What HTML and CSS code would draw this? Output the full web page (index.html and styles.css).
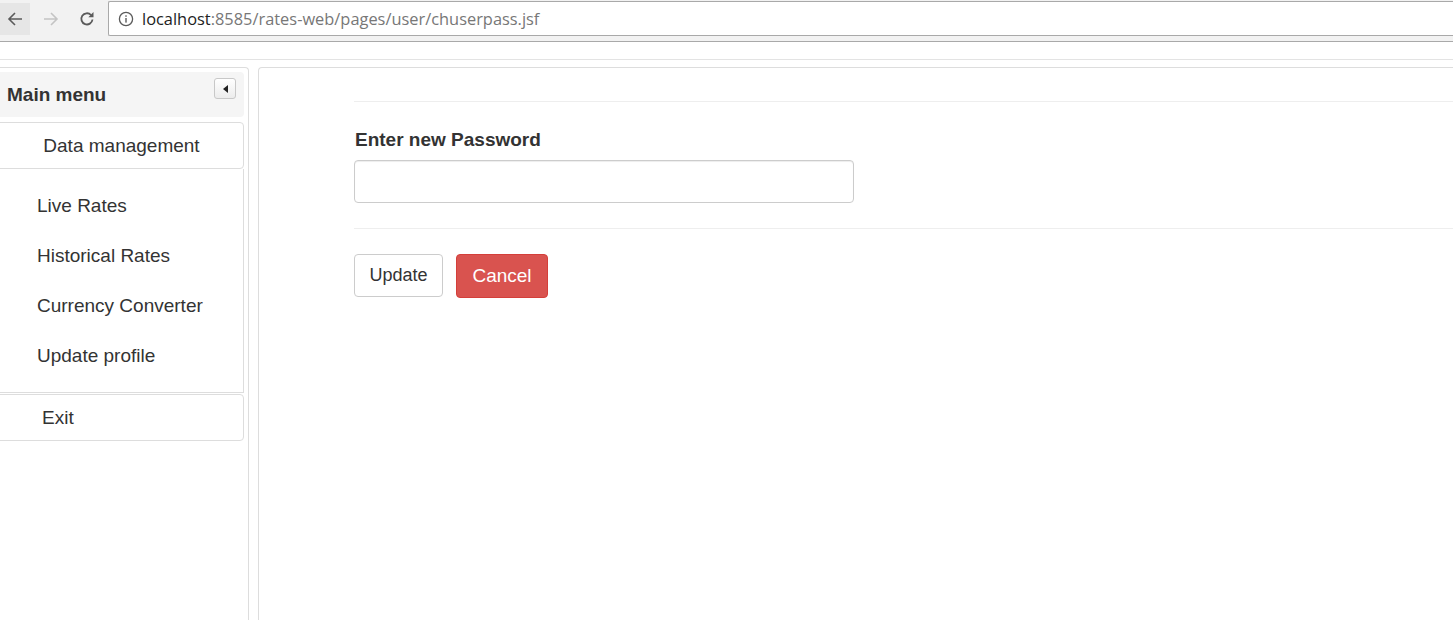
FILE: index.html
```html
<!DOCTYPE html>
<html>
<head>
<meta charset="utf-8">
<link rel="stylesheet" href="styles.css">
</head>
<body>
<div class="toolbar">
  <div class="nav-btn back">
    <svg width="18" height="18" viewBox="0 0 18 18"><path d="M16 9H3M9 3L3 9l6 6" fill="none" stroke="#5a5a5a" stroke-width="1.6"/></svg>
  </div>
  <div class="nav-btn fwd">
    <svg width="18" height="18" viewBox="0 0 18 18"><path d="M2 9h13M9 3l6 6-6 6" fill="none" stroke="#c4c4c4" stroke-width="1.6"/></svg>
  </div>
  <div class="nav-btn reload">
    <svg width="18" height="18" viewBox="0 0 18 18"><path d="M14.5 9.5A5.6 5.6 0 1 1 13 5" fill="none" stroke="#5a5a5a" stroke-width="1.8"/><path d="M15.5 2v5.2h-5.2z" fill="#5a5a5a"/></svg>
  </div>
  <div class="omnibox">
    <svg class="info" width="16" height="16" viewBox="0 0 16 16"><circle cx="8" cy="8" r="6.6" fill="none" stroke="#5a5a5a" stroke-width="1.3"/><rect x="7.3" y="7" width="1.4" height="4.6" fill="#5a5a5a"/><rect x="7.3" y="4.3" width="1.4" height="1.5" fill="#5a5a5a"/></svg>
    <span class="host">localhost</span><span class="path">:8585/rates-web/pages/user/chuserpass.jsf</span>
  </div>
</div>
<div class="topbar"></div>
<div class="layout">
  <aside class="sidebar">
    <div class="menu-header">
      <span>Main menu</span>
      <div class="toggle"><span class="tri"></span></div>
    </div>
    <div class="menu-box centered">Data management</div>
    <ul class="menu-list">
      <li>Live Rates</li>
      <li>Historical Rates</li>
      <li>Currency Converter</li>
      <li>Update profile</li>
    </ul>
    <div class="menu-box exit">Exit</div>
  </aside>
  <main class="content">
    <div class="form">
      <hr class="sep first">
      <label class="label">Enter new Password</label>
      <input class="input" type="password">
      <hr class="sep">
      <div class="actions">
        <button class="btn btn-default">Update</button>
        <button class="btn btn-danger">Cancel</button>
      </div>
    </div>
  </main>
</div>
</body>
</html>
```
FILE: styles.css
```css
html, body {
  margin: 0;
  padding: 0;
  height: 100%;
  overflow: hidden;
  background: #fff;
  font-family: "Liberation Sans", Arial, sans-serif;
  color: #333;
}

.toolbar {
  height: 41px;
  background: #f2f2f2;
  border-bottom: 1px solid #a9a9a9;
  display: flex;
  align-items: flex-start;
}

.nav-btn {
  width: 30px;
  height: 32px;
  margin-top: 3px;
  display: flex;
  align-items: center;
  justify-content: center;
}
.nav-btn.back { background: #e6e6e6; }
.nav-btn.fwd { margin-left: 6px; }
.nav-btn.reload { margin-left: 6px; }

.omnibox {
  margin-left: 6px;
  margin-top: 1px;
  flex: 1;
  height: 33px;
  background: #fff;
  border: 1px solid #a9a9a9;
  border-right: none;
  border-radius: 2px 0 0 2px;
  display: flex;
  align-items: center;
  font-family: "Open Sans", "Liberation Sans", sans-serif;
  font-size: 16.4px;
}
.omnibox .info { margin-left: 9px; margin-right: 8px; }
.host { color: #222; }
.path { color: #777; }

.topbar {
  height: 17px;
  border-bottom: 1px solid #e3e3e3;
}

.layout {
  display: flex;
  margin-top: 7px;
  height: 560px;
}

.sidebar {
  width: 249px;
  margin-left: -10px;
  padding: 4px;
  border: 1px solid #ddd;
  border-bottom: none;
  border-radius: 4px 4px 0 0;
  flex-shrink: 0;
}

.menu-header {
  height: 45px;
  background: #f5f5f5;
  border-radius: 4px;
  display: flex;
  align-items: center;
  justify-content: space-between;
  padding: 0 8px 0 12px;
  font-size: 19px;
  font-weight: bold;
  color: #333;
}

.toggle {
  width: 20px;
  height: 19px;
  border: 1px solid #c8c8c8;
  border-radius: 3px;
  background: linear-gradient(#fff, #ececec);
  display: flex;
  align-items: center;
  justify-content: center;
  margin-top: -12px;
}
.tri {
  width: 0;
  height: 0;
  border-top: 4px solid transparent;
  border-bottom: 4px solid transparent;
  border-right: 5px solid #222;
}

.menu-box {
  margin-top: 5px;
  height: 45px;
  border: 1px solid #ddd;
  border-radius: 4px;
  display: flex;
  align-items: center;
  font-size: 19px;
  color: #333;
}
.menu-box.centered { justify-content: center; padding-left: 4px; }
.menu-box.exit { margin-top: 1px; padding-left: 46px; }

.menu-list {
  list-style: none;
  margin: 0;
  padding: 12px 0 11px;
  border: 1px solid #ddd;
  border-top: none;
  height: 200px;
}
.menu-list li {
  height: 50px;
  line-height: 50px;
  padding-left: 41px;
  font-size: 19px;
  color: #333;
}

.content {
  flex: 1;
  margin-left: 9px;
  border: 1px solid #ddd;
  border-right: none;
  border-bottom: none;
  border-radius: 4px 0 0 0;
}

.form {
  margin-left: 95px;
  padding-top: 33px;
  display: flex;
  flex-direction: column;
  align-items: flex-start;
}

.sep {
  width: 100%;
  border: none;
  border-top: 1px solid #eee;
  margin: 0;
}

.label {
  font-size: 19px;
  font-weight: bold;
  margin-top: 27px;
  margin-left: 1px;
  line-height: 22px;
}

.input {
  margin-top: 9px;
  width: 500px;
  height: 43px;
  box-sizing: border-box;
  border: 1px solid #ccc;
  border-radius: 4px;
  box-shadow: inset 0 1px 1px rgba(0,0,0,.075);
  margin-bottom: 25px;
}

.actions {
  margin-top: 25px;
  display: flex;
  gap: 13px;
}

.btn {
  height: 43px;
  border-radius: 4px;
  font-family: "Liberation Sans", Arial, sans-serif;
  padding: 0;
  cursor: pointer;
}
.btn-default {
  background: #fff;
  border: 1px solid #ccc;
  color: #333;
  font-size: 18px;
  width: 89px;
}
.btn-danger {
  background: #d9534f;
  border: 1px solid #d43f3a;
  color: #fff;
  font-size: 19px;
  width: 92px;
  height: 44px;
}
```
